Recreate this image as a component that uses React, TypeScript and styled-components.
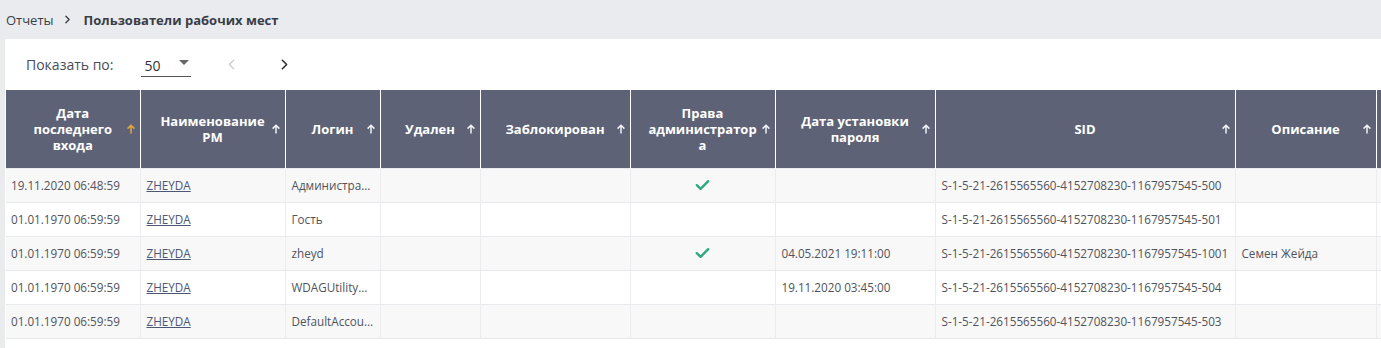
import React from "react";
import styled, { createGlobalStyle } from "styled-components";
import { ChevronLeft, ChevronRight } from "lucide-react";

const GlobalStyle = createGlobalStyle`
  html, body {
    margin: 0;
    padding: 0;
    background: #e9ebee;
    font-family: "Open Sans", "Noto Sans", sans-serif;
  }
`;

type Column = { key: string; label: React.ReactNode; width: number; active?: boolean };

const columns: Column[] = [
  { key: "lastLogin", label: <>Дата<br />последнего<br />входа</>, width: 134, active: true },
  { key: "name", label: <>Наименование<br />РМ</>, width: 145 },
  { key: "login", label: "Логин", width: 95 },
  { key: "deleted", label: "Удален", width: 100 },
  { key: "blocked", label: "Заблокирован", width: 150 },
  { key: "admin", label: <>Права<br />администратор<br />а</>, width: 145 },
  { key: "pwdDate", label: <>Дата установки<br />пароля</>, width: 160 },
  { key: "sid", label: "SID", width: 300 },
  { key: "descr", label: "Описание", width: 141 },
  { key: "more", label: "", width: 140 },
];

const tableWidth = columns.reduce((sum, c) => sum + c.width, 0);

const sidBase = "S-1-5-21-2615565560-4152708230-1167957545-";

const rows = [
  { lastLogin: "19.11.2020 06:48:59", name: "ZHEYDA", login: "Администратор", admin: true, pwdDate: "", sid: sidBase + "500", descr: "" },
  { lastLogin: "01.01.1970 06:59:59", name: "ZHEYDA", login: "Гость", admin: false, pwdDate: "", sid: sidBase + "501", descr: "" },
  { lastLogin: "01.01.1970 06:59:59", name: "ZHEYDA", login: "zheyd", admin: true, pwdDate: "04.05.2021 19:11:00", sid: sidBase + "1001", descr: "Семен Жейда" },
  { lastLogin: "01.01.1970 06:59:59", name: "ZHEYDA", login: "WDAGUtilityAccount", admin: false, pwdDate: "19.11.2020 03:45:00", sid: sidBase + "504", descr: "" },
  { lastLogin: "01.01.1970 06:59:59", name: "ZHEYDA", login: "DefaultAccount", admin: false, pwdDate: "", sid: sidBase + "503", descr: "" },
];

const Page = styled.div`
  width: 1381px;
  height: 348px;
  overflow: hidden;
`;

const Breadcrumbs = styled.div`
  height: 39px;
  display: flex;
  align-items: center;
  padding-left: 6px;
  font-size: 13px;
  color: #3a3d47;
`;

const Crumb = styled.span`
  color: #3a3d47;
`;

const CrumbSep = styled(ChevronRight)`
  margin: 0 10px 0 7px;
  color: #3a3d47;
`;

const CrumbCurrent = styled.span`
  font-weight: 700;
  color: #3a3d47;
`;

const Panel = styled.div`
  margin-left: 5px;
  background: #fff;
  height: 309px;
  overflow: hidden;
`;

const Toolbar = styled.div`
  height: 51px;
  display: flex;
  align-items: center;
  padding-left: 21px;
  font-size: 14px;
  color: #4a4d57;
`;

const PageSize = styled.div`
  margin-left: 28px;
  width: 50px;
  height: 22px;
  border-bottom: 1px solid #555;
  display: flex;
  align-items: center;
  justify-content: space-between;
  padding-left: 3px;
  box-sizing: border-box;
  color: #333;
  margin-top: 2px;
`;

const Caret = styled.span`
  width: 0;
  height: 0;
  border-left: 5px solid transparent;
  border-right: 5px solid transparent;
  border-top: 5px solid #666;
  margin-right: 2px;
  margin-bottom: 6px;
`;

const PagerButton = styled.button<{ $disabled?: boolean }>`
  border: none;
  background: none;
  padding: 0;
  display: flex;
  align-items: center;
  color: ${({ $disabled }) => ($disabled ? "#c9cbd0" : "#2b2d33")};
  margin-left: ${({ $disabled }) => ($disabled ? "32px" : "36px")};
`;

const Table = styled.table<{ $width: number }>`
  border-collapse: collapse;
  table-layout: fixed;
  width: ${({ $width }) => $width}px;
  margin-left: 1px;
`;

const HeadCell = styled.th`
  position: relative;
  height: 78px;
  background: #5e6276;
  color: #fff;
  font-size: 13px;
  font-weight: 700;
  line-height: 16px;
  text-align: center;
  padding: 0 14px;
  border-right: 1px solid #fff;
  box-sizing: border-box;
`;

const SortIcon = styled.svg<{ $active?: boolean }>`
  position: absolute;
  right: 4px;
  top: 50%;
  margin-top: -5px;
  color: ${({ $active }) => ($active ? "#e2a93b" : "#f1f2f5")};
`;

const Row = styled.tr<{ $odd: boolean }>`
  background: ${({ $odd }) => ($odd ? "#f8f8f9" : "#fff")};
  border-top: 1px solid #e8e9ec;
  &:last-child {
    border-bottom: 1px solid #e8e9ec;
  }
`;

const Cell = styled.td<{ $center?: boolean }>`
  height: 34px;
  padding: 0 6px 0 6px;
  font-size: 11.7px;
  color: #50535b;
  white-space: nowrap;
  overflow: hidden;
  text-overflow: ellipsis;
  border-right: 1px solid #ececee;
  text-align: ${({ $center }) => ($center ? "center" : "left")};
  box-sizing: border-box;
  &:first-child {
    padding-left: 5px;
  }
`;

const Link = styled.a`
  color: #4d5773;
  text-decoration: underline;
  cursor: pointer;
`;

const Check = () => (
  <svg width="15" height="12" viewBox="0 0 15 12" style={{ display: "inline-block", verticalAlign: "middle", marginTop: -3 }}>
    <path d="M1.8 6.2 L5.6 9.8 L13.2 2.2" fill="none" stroke="#2fa97e" strokeWidth="2.4" strokeLinecap="round" strokeLinejoin="round" />
  </svg>
);

const SortArrow = ({ active }: { active?: boolean }) => (
  <SortIcon $active={active} width="10" height="10" viewBox="0 0 10 10">
    <path d="M5 9.5V1.2 M1.6 4.6 L5 1.2 L8.4 4.6" fill="none" stroke="currentColor" strokeWidth="1.5" />
  </SortIcon>
);

export default function App() {
  return (
    <Page>
      <GlobalStyle />
      <Breadcrumbs>
        <Crumb>Отчеты</Crumb>
        <CrumbSep size={13} strokeWidth={2.5} />
        <CrumbCurrent>Пользователи рабочих мест</CrumbCurrent>
      </Breadcrumbs>
      <Panel>
        <Toolbar>
          Показать по:
          <PageSize>
            50
            <Caret />
          </PageSize>
          <PagerButton $disabled>
            <ChevronLeft size={17} strokeWidth={1.8} />
          </PagerButton>
          <PagerButton>
            <ChevronRight size={17} strokeWidth={2.2} />
          </PagerButton>
        </Toolbar>
        <Table $width={tableWidth}>
          <colgroup>
            {columns.map((c) => (
              <col key={c.key} style={{ width: c.width }} />
            ))}
          </colgroup>
          <thead>
            <tr>
              {columns.map((c) => (
                <HeadCell key={c.key}>
                  {c.label}
                  {c.label !== "" && <SortArrow active={c.active} />}
                </HeadCell>
              ))}
            </tr>
          </thead>
          <tbody>
            {rows.map((r, i) => (
              <Row key={i} $odd={i % 2 === 0}>
                <Cell>{r.lastLogin}</Cell>
                <Cell>
                  <Link>{r.name}</Link>
                </Cell>
                <Cell title={r.login}>{r.login}</Cell>
                <Cell />
                <Cell />
                <Cell $center>{r.admin && <Check />}</Cell>
                <Cell>{r.pwdDate}</Cell>
                <Cell>{r.sid}</Cell>
                <Cell>{r.descr}</Cell>
                <Cell />
              </Row>
            ))}
          </tbody>
        </Table>
      </Panel>
    </Page>
  );
}
